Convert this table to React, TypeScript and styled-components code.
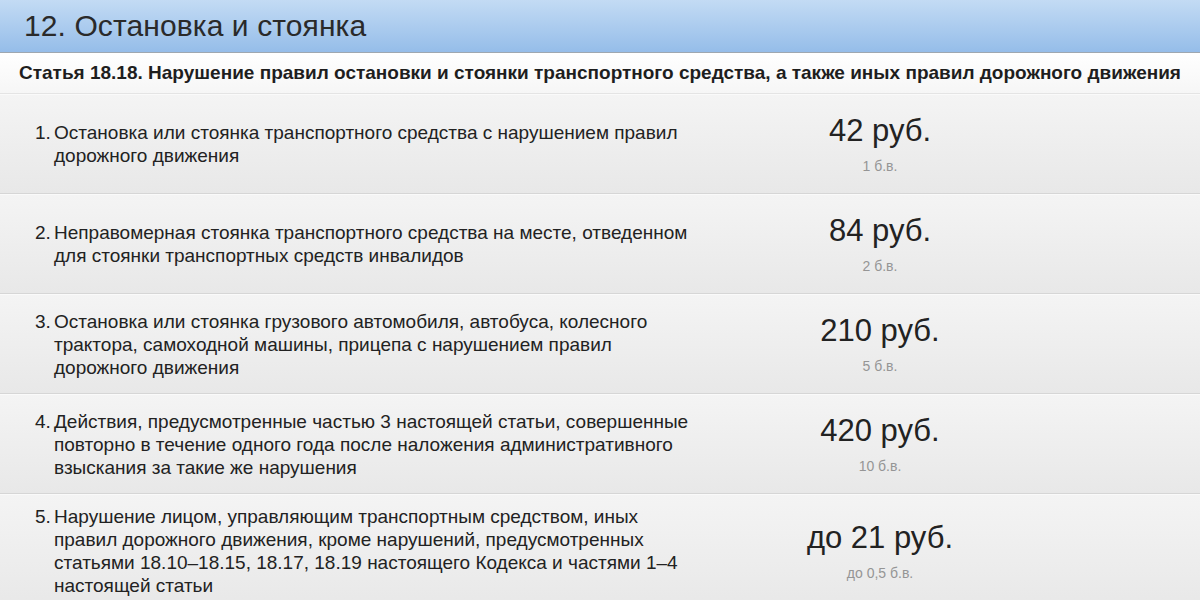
import styled, { createGlobalStyle } from "styled-components";

const GlobalStyle = createGlobalStyle`
  body {
    margin: 0;
    font-family: "Liberation Sans", Arial, sans-serif;
    color: #222;
    background: #fff;
  }
`;

const items = [
  {
    n: 1,
    text: "Остановка или стоянка транспортного средства с нарушением правил дорожного движения",
    price: "42 руб.",
    units: "1 б.в.",
  },
  {
    n: 2,
    text: "Неправомерная стоянка транспортного средства на месте, отведенном для стоянки транспортных средств инвалидов",
    price: "84 руб.",
    units: "2 б.в.",
  },
  {
    n: 3,
    text: "Остановка или стоянка грузового автомобиля, автобуса, колесного трактора, самоходной машины, прицепа с нарушением правил дорожного движения",
    price: "210 руб.",
    units: "5 б.в.",
  },
  {
    n: 4,
    text: "Действия, предусмотренные частью 3 настоящей статьи, совершенные повторно в течение одного года после наложения административного взыскания за такие же нарушения",
    price: "420 руб.",
    units: "10 б.в.",
  },
  {
    n: 5,
    text: "Нарушение лицом, управляющим транспортным средством, иных правил дорожного движения, кроме нарушений, предусмотренных статьями 18.10–18.15, 18.17, 18.19 настоящего Кодекса и частями 1–4 настоящей статьи",
    price: "до 21 руб.",
    units: "до 0,5 б.в.",
  },
];

export default function App() {
  return (
    <Page>
      <GlobalStyle />
      <Header>
        <Title>12. Остановка и стоянка</Title>
      </Header>
      <Article>
        Статья 18.18. Нарушение правил остановки и стоянки транспортного средства, а также иных правил дорожного движения
      </Article>
      {items.map((it) => (
        <Row key={it.n}>
          <Desc>
            <Num>{it.n}.</Num>
            <span>{it.text}</span>
          </Desc>
          <Fine>
            <Price>{it.price}</Price>
            <Units>{it.units}</Units>
          </Fine>
        </Row>
      ))}
    </Page>
  );
}

const Page = styled.div`
  width: 1200px;
`;

const Header = styled.header`
  height: 52px;
  background: linear-gradient(#c3dbf4, #95bde9);
  border-bottom: 1px solid #9ea7b0;
  display: flex;
  align-items: center;
  padding-left: 24px;
`;

const Title = styled.h1`
  margin: 0;
  font-size: 30px;
  font-weight: normal;
  color: #2a2a2a;
  letter-spacing: 0.1px;
`;

const Article = styled.h2`
  margin: 0;
  height: 40px;
  display: flex;
  align-items: center;
  justify-content: center;
  background: linear-gradient(#ffffff, #f6f6f6);
  border-bottom: 1px solid #e4e4e4;
  font-size: 19px;
  font-weight: bold;
  color: #1e1e1e;
  white-space: nowrap;
`;

const Row = styled.section`
  display: grid;
  grid-template-columns: 695px 370px;
  align-items: center;
  min-height: 100px;
  box-sizing: border-box;
  padding: 10px 0;
  background: linear-gradient(#f4f4f4, #e8e8e8);
  border-bottom: 1px solid #d6d6d6;
  border-top: 1px solid #fafafa;
`;

const Desc = styled.div`
  display: flex;
  padding-left: 35px;
  font-size: 19px;
  line-height: 23px;
  color: #222;
`;

const Num = styled.span`
  flex: none;
  width: 19px;
`;

const Fine = styled.div`
  display: flex;
  flex-direction: column;
  align-items: center;
`;

const Price = styled.div`
  font-size: 31px;
  line-height: 34px;
  color: #222;
`;

const Units = styled.div`
  margin-top: 10px;
  font-size: 14px;
  line-height: 16px;
  color: #959595;
`;
